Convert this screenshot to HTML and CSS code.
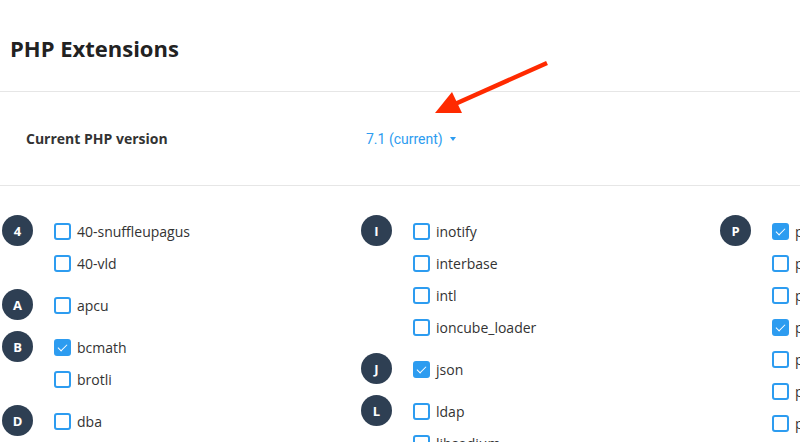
FILE: index.html
```html
<!DOCTYPE html>
<html>
<head>
<meta charset="utf-8">
<link rel="stylesheet" href="styles.css">
</head>
<body>
<div class="page">
  <header class="header"><h1 class="title">PHP Extensions</h1></header>
  <div class="version-row">
    <div class="version-label">Current PHP version</div>
    <div class="version-value">7.1 (current) <span class="caret"></span></div>
  </div>
  <div class="columns">
    <div class="column">
      <div class="group">
        <div class="badge">4</div>
        <ul class="items">
          <li class="item"><span class="box"></span>40-snuffleupagus</li>
          <li class="item"><span class="box"></span>40-vld</li>
        </ul>
      </div>
      <div class="group">
        <div class="badge">A</div>
        <ul class="items">
          <li class="item"><span class="box"></span>apcu</li>
        </ul>
      </div>
      <div class="group">
        <div class="badge">B</div>
        <ul class="items">
          <li class="item"><span class="box checked"></span>bcmath</li>
          <li class="item"><span class="box"></span>brotli</li>
        </ul>
      </div>
      <div class="group">
        <div class="badge">D</div>
        <ul class="items">
          <li class="item"><span class="box"></span>dba</li>
          <li class="item"><span class="box"></span>dbase</li>
        </ul>
      </div>
    </div>
    <div class="column">
      <div class="group">
        <div class="badge">I</div>
        <ul class="items">
          <li class="item"><span class="box"></span>inotify</li>
          <li class="item"><span class="box"></span>interbase</li>
          <li class="item"><span class="box"></span>intl</li>
          <li class="item"><span class="box"></span>ioncube_loader</li>
        </ul>
      </div>
      <div class="group">
        <div class="badge">J</div>
        <ul class="items">
          <li class="item"><span class="box checked"></span>json</li>
        </ul>
      </div>
      <div class="group">
        <div class="badge">L</div>
        <ul class="items">
          <li class="item"><span class="box"></span>ldap</li>
          <li class="item"><span class="box"></span>libsodium</li>
        </ul>
      </div>
    </div>
    <div class="column">
      <div class="group">
        <div class="badge">P</div>
        <ul class="items">
          <li class="item"><span class="box checked"></span>pdo</li>
          <li class="item"><span class="box"></span>pdo_dblib</li>
          <li class="item"><span class="box"></span>pdo_firebird</li>
          <li class="item"><span class="box checked"></span>pdo_mysql</li>
          <li class="item"><span class="box"></span>pdo_oci</li>
          <li class="item"><span class="box"></span>pdo_odbc</li>
          <li class="item"><span class="box"></span>pdo_pgsql</li>
        </ul>
      </div>
    </div>
  </div>
  <svg class="arrow" width="800" height="442" viewBox="0 0 800 442">
    <line x1="547" y1="63" x2="455" y2="104" stroke="#ff2a00" stroke-width="4.5"/>
    <polygon points="435,113 452,92 462,113" fill="#ff2a00"/>
  </svg>
</div>
</body>
</html>
```
FILE: styles.css
```css
html, body {
  margin: 0;
  padding: 0;
  overflow: hidden;
  background: #fff;
}
.page {
  position: relative;
  width: 800px;
  height: 442px;
  overflow: hidden;
  font-family: "Open Sans", "Liberation Sans", sans-serif;
  color: #333;
}
.header {
  height: 92px;
  box-sizing: border-box;
  padding: 33px 10px 0;
  border-bottom: 1px solid #e6e6e6;
}
.title {
  margin: 0;
  font-size: 22px;
  line-height: 30px;
  font-weight: 700;
  color: #222;
}
.version-row {
  display: flex;
  align-items: center;
  height: 94px;
  box-sizing: border-box;
  border-bottom: 1px solid #e6e6e6;
  padding-left: 26px;
}
.version-label {
  width: 340px;
  font-size: 14px;
  font-weight: 700;
  color: #333;
}
.version-value {
  font-family: Roboto, "Liberation Sans", sans-serif;
  font-size: 14px;
  color: #2d9cf0;
  display: flex;
  align-items: center;
}
.caret {
  display: inline-block;
  margin-left: 7px;
  width: 0;
  height: 0;
  border-left: 3.5px solid transparent;
  border-right: 3.5px solid transparent;
  border-top: 4px solid #2d9cf0;
}
.columns {
  display: grid;
  grid-template-columns: 359px 359px 359px;
  padding: 29px 0 0 2px;
}
.group {
  display: flex;
  align-items: flex-start;
  margin-bottom: 10px;
}
.badge {
  flex: none;
  width: 31px;
  height: 31px;
  border-radius: 50%;
  background: #2e3f53;
  color: #fff;
  font-size: 13px;
  font-weight: 700;
  display: flex;
  align-items: center;
  justify-content: center;
  margin-right: 21px;
}
.items {
  list-style: none;
  margin: 0;
  padding: 0;
}
.item {
  height: 32px;
  display: flex;
  align-items: center;
  font-size: 14px;
  color: #333;
  white-space: nowrap;
}
.box {
  flex: none;
  width: 17px;
  height: 17px;
  box-sizing: border-box;
  border: 2px solid #2d9cf0;
  border-radius: 3px;
  margin-right: 6px;
  position: relative;
}
.box.checked {
  background: #2d9cf0;
}
.box.checked::after {
  content: "";
  position: absolute;
  left: 4px;
  top: 1px;
  width: 4px;
  height: 8px;
  border-right: 1.5px solid #fff;
  border-bottom: 1.5px solid #fff;
  transform: rotate(45deg);
}
.arrow {
  position: absolute;
  left: 0;
  top: 0;
  pointer-events: none;
}
```
